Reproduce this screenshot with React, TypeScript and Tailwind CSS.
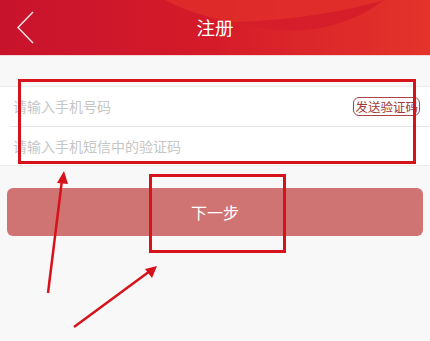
import { useState } from "react";

const Header = () => {
  return (
    <div className="relative h-14 w-full overflow-hidden bg-gradient-to-r from-[#c8132c] via-[#d51b29] to-[#e4332a] border-b border-[#f3d6d6]">
      {/* soft wave shapes */}
      <svg className="absolute inset-0" width="430" height="56" viewBox="0 0 430 56">
        <path d="M165 0 C192 14 220 21 243 23 C300 20 360 8 390 0 Z" fill="#e12e2b" opacity="0.8" />
        <path d="M236 22 C272 34 335 38 384 0 C345 12 292 20 236 22 Z" fill="#d51e29" />
      </svg>
      <div className="relative flex h-full items-center">
        <button className="flex h-full w-[50px] items-center pl-[17px]">
          <svg width="18" height="33" viewBox="0 0 18 33" fill="none">
            <polyline points="16,1 1,16.5 16,32" stroke="#fbe9ea" strokeWidth="1.4" />
          </svg>
        </button>
        <div className="pointer-events-none absolute left-0 right-0 text-center text-[18.5px] text-white">
          注册
        </div>
      </div>
    </div>
  );
};

const App = () => {
  const [phone, setPhone] = useState("");
  const [code, setCode] = useState("");

  return (
    <div
      className="relative h-[341px] w-full overflow-hidden bg-[#f8f8f8]"
      style={{ fontFamily: '"Noto Sans CJK SC", "Noto Sans", sans-serif' }}
    >
      <Header />

      {/* form panel */}
      <div className="mt-[30px] border-t border-b border-[#ececec] bg-white">
        <div className="flex h-[39px] items-center pl-[13px] pr-[10px]">
          <input
            value={phone}
            onChange={(e) => setPhone(e.target.value)}
            placeholder="请输入手机号码"
            className="min-w-0 flex-1 bg-transparent text-[14px] text-[#333] outline-none placeholder:text-[#c6c6c6]"
          />
          <button className="h-[19px] rounded-[6px] border border-[#a84646] px-px text-[12.5px] leading-[17px] text-[#9e3a3a]">
            发送验证码
          </button>
        </div>
        <div className="ml-[10px] h-px bg-[#e6e6e6]" />
        <div className="flex h-[38px] items-center pl-[13px] pr-[10px]">
          <input
            value={code}
            onChange={(e) => setCode(e.target.value)}
            placeholder="请输入手机短信中的验证码"
            className="min-w-0 flex-1 bg-transparent text-[14px] text-[#333] outline-none placeholder:text-[#c6c6c6]"
          />
        </div>
      </div>

      {/* next step */}
      <div className="mt-[22px] px-[7px]">
        <button className="h-12 w-full rounded-[6px] bg-[#d07373] text-[16px] text-white">
          下一步
        </button>
      </div>

      {/* annotation marks */}
      <div className="pointer-events-none absolute left-[18px] top-[79px] h-[85px] w-[398px] border-[3px] border-[#d6121b]" />
      <div className="pointer-events-none absolute left-[149px] top-[174px] h-[79px] w-[137px] border-[3px] border-[#d6121b]" />
      <svg className="pointer-events-none absolute inset-0" width="430" height="341" viewBox="0 0 430 341">
        <line x1="48" y1="293" x2="62" y2="180" stroke="#d6121b" strokeWidth="2.5" />
        <polygon points="64,171 57,183 68,184" fill="#d6121b" />
        <line x1="74" y1="327" x2="150" y2="271" stroke="#d6121b" strokeWidth="2.5" />
        <polygon points="157,266 145,269 152,278" fill="#d6121b" />
      </svg>
    </div>
  );
};

export default App;
